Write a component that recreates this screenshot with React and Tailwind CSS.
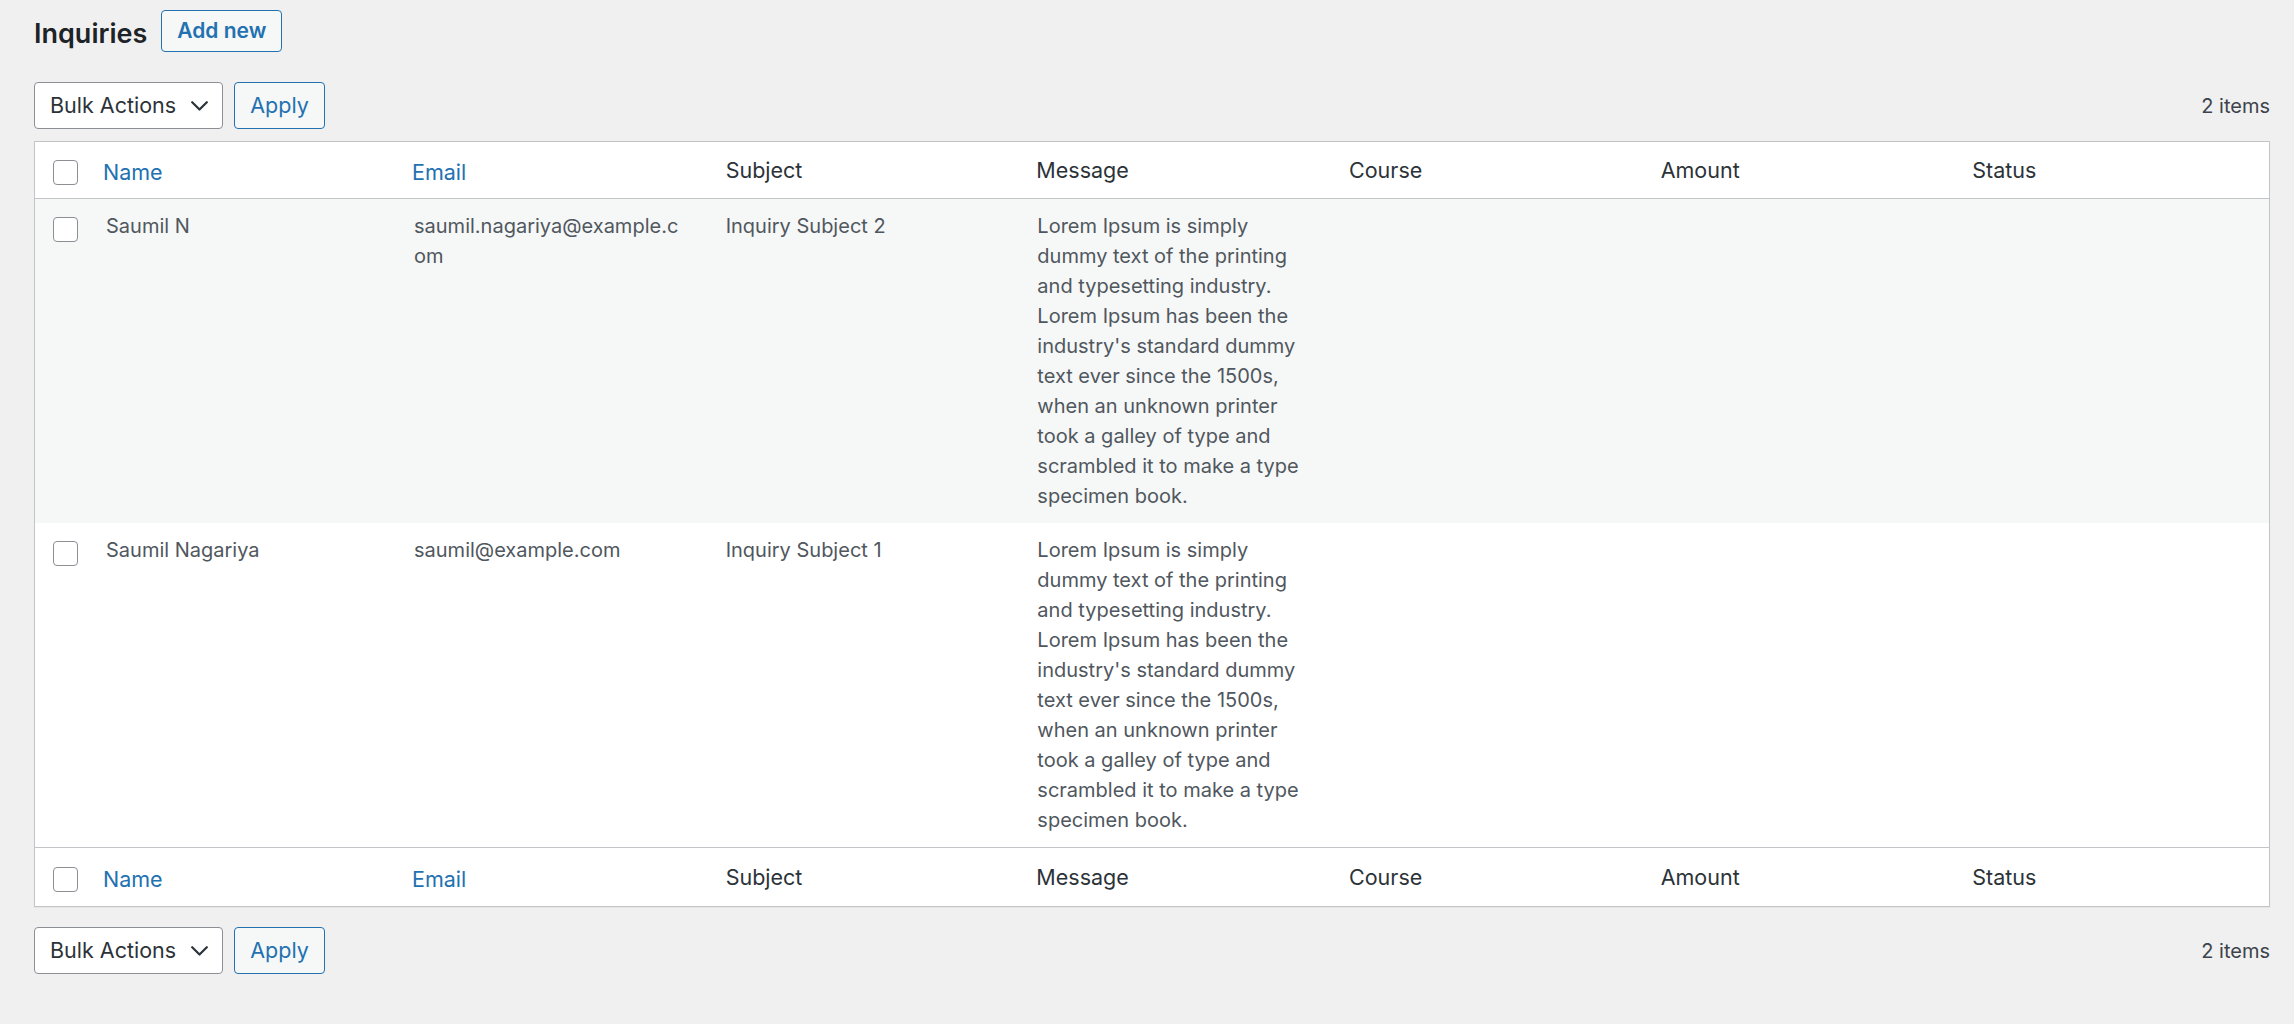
import React from 'react';

const rows = [
  {
    id: 2,
    name: 'Saumil N',
    email: 'saumil.nagariya@example.com',
    subject: 'Inquiry Subject 2',
    message:
      "Lorem Ipsum is simply dummy text of the printing and typesetting industry. Lorem Ipsum has been the industry's standard dummy text ever since the 1500s, when an unknown printer took a galley of type and scrambled it to make a type specimen book.",
  },
  {
    id: 1,
    name: 'Saumil Nagariya',
    email: 'saumil@example.com',
    subject: 'Inquiry Subject 1',
    message:
      "Lorem Ipsum is simply dummy text of the printing and typesetting industry. Lorem Ipsum has been the industry's standard dummy text ever since the 1500s, when an unknown printer took a galley of type and scrambled it to make a type specimen book.",
  },
];

const cols = 'grid grid-cols-[56px_308px_repeat(6,minmax(0,1fr))]';

const Checkbox = () => (
  <div className="w-[25px] h-[25px] border border-[#8c8f94] rounded-[4px] bg-white" />
);

const HeadRow = ({ top }) => (
  <div
    className={`${cols} items-center text-[21.5px] leading-[30px] text-[#2c3338] ${
      top ? 'h-[57px] border-b' : 'h-[59px] border-t'
    } border-[#c3c4c7] bg-white`}
  >
    <div className="pl-[17.5px] pt-[5px]">
      <Checkbox />
    </div>
    <div className="pl-[12px] pt-[3px] text-[#2271b1]">Name</div>
    <div className="pl-[13px] pt-[3px] text-[#2271b1]">Email</div>
    <div className="pl-[15px]">Subject</div>
    <div className="pl-[14px]">Message</div>
    <div className="pl-[15px]">Course</div>
    <div className="pl-[15px]">Amount</div>
    <div className="pl-[15px]">Status</div>
  </div>
);

const TableNav = () => (
  <div className="flex items-center justify-between">
    <div className="flex items-center">
      <div className="w-[189px] h-[47px] flex items-center justify-between pl-[15px] pr-[14px] border border-[#8c8f94] rounded-[4px] bg-white text-[21.5px] text-[#2c3338]">
        <span>Bulk Actions</span>
        <svg width="17" height="10" viewBox="0 0 17 10" fill="none">
          <polyline points="1.2,1.2 8.5,8.5 15.8,1.2" stroke="#2c3338" strokeWidth="2.2" strokeLinecap="round" strokeLinejoin="round" />
        </svg>
      </div>
      <button className="ml-[11px] w-[91px] h-[47px] border border-[#2271b1] rounded-[4px] bg-[#f6f7f7] text-[#2271b1] text-[21.5px]">
        Apply
      </button>
    </div>
    <span className="text-[20px] text-[#3c434a]">2 items</span>
  </div>
);

export default function App() {
  return (
    <div className="min-h-[1024px] bg-[#f0f0f1] pl-[34px] pr-[24px] pt-[10px] font-[Inter,sans-serif]">
      <div className="flex items-start h-[44px]">
        <h1 className="mt-[4px] text-[27px] leading-[40px] font-semibold text-[#1d2327]">Inquiries</h1>
        <button className="ml-[14px] h-[42px] px-[15px] border border-[#2271b1] rounded-[4px] bg-[#f6f7f7] text-[#2271b1] text-[21px] font-semibold">
          Add new
        </button>
      </div>

      <div className="mt-[28px]">
        <TableNav />
      </div>

      <div className="mt-[12px] border border-[#c3c4c7] bg-white shadow-[0_1px_1px_rgba(0,0,0,0.04)]">
        <HeadRow top />
        {rows.map((row, i) => (
          <div
            key={row.id}
            className={`${cols} py-[12px] text-[20px] leading-[30px] text-[#50575e] ${
              i % 2 === 0 ? 'bg-[#f6f7f7]' : 'bg-white'
            }`}
          >
            <div className="pl-[17.5px] pt-[6px]">
              <Checkbox />
            </div>
            <div className="px-[15px]">{row.name}</div>
            <div className="pl-[15px] pr-[28px] [overflow-wrap:anywhere]">{row.email}</div>
            <div className="px-[15px]">{row.subject}</div>
            <div className="px-[15px]">{row.message}</div>
            <div className="px-[15px]" />
            <div className="px-[15px]" />
            <div className="px-[15px]" />
          </div>
        ))}
        <HeadRow />
      </div>

      <div className="mt-[20px]">
        <TableNav />
      </div>
    </div>
  );
}
